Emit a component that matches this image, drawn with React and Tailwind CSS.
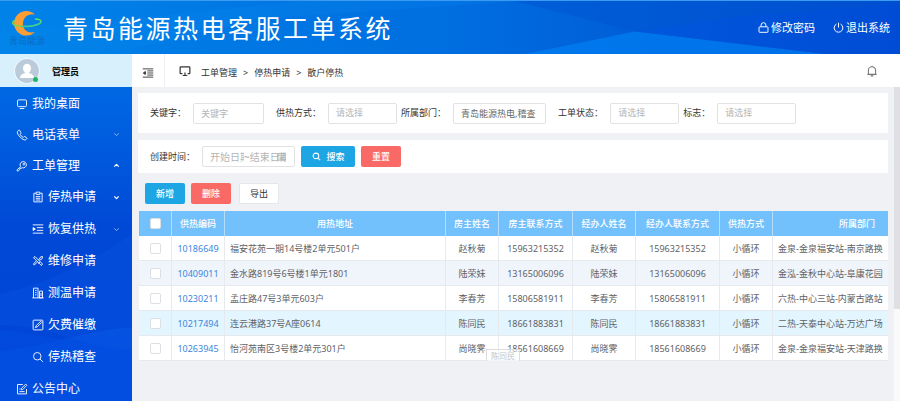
import { useState } from "react";

// All line icons share a 16px grid
const paths = {
  desktop: <><rect x="2" y="2.5" width="12" height="9" rx="1.5" /><path d="M5 14h6" /></>,
  phone: <path d="M3.6 1.6 2 3.2c-.6.8-.3 2.9 1.7 5.6 2.300 3 5.300 5.200 7.600 5.700 1.300.3 2.100-.2 3.100-1.400.4-.5.3-1-.2-1.400l-2.300-1.600c-.5-.3-1-.2-1.400.2l-.8.9c-1.900-.8-3.400-2.300-4.300-4.200l.9-.9c.4-.4.4-.9.1-1.400L4.900 1.800c-.4-.5-.9-.6-1.300-.2Z" />,
  key: <><path d="M6.200 8.800a4.200 4.200 0 1 1 2 1.500L6.800 11H5.200v1.600L3 14.500H1.500V13l4.700-4.200Z" /><circle cx="10.500" cy="5.500" r="1.100" /></>,
  clipboard: <><path d="M5 3H2.500v11.500h11V3H11" /><path d="M5.500 1.500h5v3h-5zM5 7.500h6M5 9.700h6M5 12h6" /></>,
  indent: <><path d="M1 2.500h14M6.500 6.200H15M6.500 9.800H15M1 13.500h14" /><path d="m1.500 6 3 2-3 2Z" fill="currentColor" /></>,
  outdent: <><path d="M1 2.500h14M7 8h8M1 13.500h14M7 5.200h8M7 10.800h8" /><path d="M4.500 6 1.700 8l2.800 2Z" fill="currentColor" /></>,
  tools: <><path d="m2 3.500 2-1.500L14 12l-1.500 2L2 3.500ZM9 6.500l2.500-4L14 2l-.5 3-3.500 2M7 9.500l-4 4L2 12l3.500-4" /><path d="m10.500 9.500-2 2" /></>,
  building: <><path d="M2 14.500v-13h6v13M.5 14.500h15M4 4.500h2M4 7.500h2M4 10.500h2" /><path d="M10 5.500h4v9h-4zM12 8v4" /></>,
  pencil: <><rect x="1.500" y="1.500" width="13" height="13" rx="1" /><path d="m4.500 11.500 1-2.500 6-6 1.500 1.500-6 6-2.500 1Z" /></>,
  search: <><circle cx="7" cy="7" r="5" /><path d="m10.700 10.700 3.800 3.800" /></>,
  notice: <><path d="M9 2H2v12.500h12V8" /><path d="m7 9 .3-2L13 1.500 14.500 3 9 8.700 7 9ZM4.500 8H6M4.500 11.500h7" /></>,
  lock: <><rect x="1.500" y="7" width="13" height="8" rx="1" /><path d="M4.500 7V4.500a3.500 3.500 0 0 1 7 0V7" /></>,
  power: <><path d="M5 3a6.300 6.300 0 1 0 6 0M8 1v7" /></>,
  monitor: <><path d="M4.500 11.500h-2c-.6 0-1-.4-1-1v-7c0-.6.4-1 1-1h11c.6 0 1 .4 1 1v7c0 .6-.4 1-1 1h-2" /><path d="M8 10v3.500M5 14h6" /></>,
  bell: <><path d="M1.800 12.500h12.400M3.200 12.500V7.200a4.800 4.800 0 0 1 9.600 0v5.300M6.200 14.500h3.600M8 1v1.400" /></>,
  calendar: <><path d="M1.500 3h13v11.500h-13zM1.500 6.500h13M5 1.500V4M11 1.500V4M4.500 9.500h7M4.500 12h7" /></>,
  down: <path d="m3 5.500 5 5 5-5" />,
  up: <path d="m3 10.500 5-5 5 5" />,
};

const Icon = ({ name, className = "size-3", weight = 1.4 }) => (
  <svg
    viewBox="0 0 16 16"
    className={`shrink-0 ${className}`}
    fill="none"
    stroke="currentColor"
    strokeWidth={weight}
    strokeLinejoin="round"
    aria-hidden="true"
  >
    {paths[name]}
  </svg>
);

const menu = [
  { label: "我的桌面", icon: "desktop" },
  { label: "电话表单", icon: "phone", arrow: "down" },
  {
    label: "工单管理",
    icon: "key",
    arrow: "up",
    bold: true,
    children: [
      { label: "停热申请", icon: "clipboard", arrow: "down", bold: true },
      { label: "恢复供热", icon: "indent", arrow: "down" },
      { label: "维修申请", icon: "tools" },
      { label: "测温申请", icon: "building" },
      { label: "欠费催缴", icon: "pencil" },
      { label: "停热稽查", icon: "search" },
    ],
  },
  { label: "公告中心", icon: "notice" },
];

const columns = [
  { label: "供热编码", width: "w-[53px]" },
  { label: "用热地址", width: "w-[221px]" },
  { label: "房主姓名", width: "w-[53px]" },
  { label: "房主联系方式", width: "w-[74px]" },
  { label: "经办人姓名", width: "w-[63px]" },
  { label: "经办人联系方式", width: "w-[84px]" },
  { label: "供热方式", width: "w-[53px]" },
  { label: "所属部门", width: "w-[169px]" },
];

const rows = [
  { code: "10186649", address: "福安花苑一期14号楼2单元501户", name: "赵秋菊", phone: "15963215352", dept: "金泉-金泉福安站-南京路换", bg: "bg-white" },
  { code: "10409011", address: "金水路819号6号楼1单元1801", name: "陆荣妹", phone: "13165006096", dept: "金泓-金秋中心站-阜康花园", bg: "bg-[#f0f5fc]" },
  { code: "10230211", address: "孟庄路47号3单元603户", name: "李春芳", phone: "15806581911", dept: "六热-中心三站-内蒙古路站", bg: "bg-white" },
  { code: "10217494", address: "连云港路37号A座0614", name: "陈同民", phone: "18661883831", dept: "二热-天泰中心站-万达广场", bg: "bg-[#e3f5fe]" },
  { code: "10263945", address: "怡河苑南区3号楼2单元301户", name: "尚晓霁", phone: "18561608669", dept: "金泉-金泉福安站-天津路换", bg: "bg-white" },
];

const Logo = () => (
  <div className="flex w-12 flex-col items-center">
    <svg viewBox="0 0 32 26" className="h-[26px] w-8" aria-hidden="true">
      <path d="M24 4.500A12.300 12.300 0 1 0 24 22c-8 2-12.500-3-12-9 .4-5.500 5-10 12-8.500Z" fill="#f99d35" />
      <path d="M4 10.500C-1 13 2 16 12 16.500c9 .4 18-2 18-5 0-1.800-3-2.500-6-2.600" fill="none" stroke="#6fdc55" strokeWidth="1.500" />
      <path d="M10 16.400c9 .4 19-1.400 20-5" fill="none" stroke="#27c6b0" strokeWidth="1" />
    </svg>
    <span className="text-[9px] leading-[10px] text-[#0a6cc4]">青岛能源</span>
  </div>
);

const Header = () => (
  <header className="relative flex h-[54px] items-center overflow-hidden border-t border-[#3a9bf0] bg-gradient-to-r from-[#0083e9] via-[#006ee0] to-[#0046cb] text-white">
    <svg className="absolute inset-0 h-full w-full" viewBox="0 0 900 54" preserveAspectRatio="none" aria-hidden="true">
      <path d="M515 0H900V3L730 17 635 31Z" fill="#0055d4" opacity=".55" />
      <path d="M525 54 635 31 825 54Z" fill="#0080f4" opacity=".7" />
      <path d="M635 31 730 17 900 2V54H825Z" fill="#0052df" opacity=".5" />
      <path d="M110 54 260 18 520 0H300L0 32V54Z" fill="#0a8df0" opacity=".2" />
    </svg>
    <div className="relative flex flex-1 items-center gap-3 pl-[3px]">
      <Logo />
      <h1 className="text-[25px] leading-8 font-normal tracking-widest whitespace-nowrap">青岛能源热电客服工单系统</h1>
    </div>
    <nav className="relative flex gap-[18px] pr-2.5 text-[11px]">
      <a href="#password" className="flex items-center gap-0.5">
        <Icon name="lock" className="size-[11px]" />
        修改密码
      </a>
      <a href="#logout" className="flex items-center gap-0.5">
        <Icon name="power" className="size-[11px]" />
        退出系统
      </a>
    </nav>
  </header>
);

const MenuItem = ({ item, sub }) => (
  <a
    href={`#${item.icon}`}
    className={`flex items-center gap-1 pr-3 text-xs hover:bg-white/10 ${sub ? "h-8 pl-8" : "h-[31px] pl-4"}`}
  >
    <Icon name={item.icon} className="size-3" weight={1.2} />
    <span className="flex-1">{item.label}</span>
    {item.arrow && (
      <Icon name={item.arrow} className={`size-[7px] ${item.bold ? "" : "opacity-60"}`} weight={item.bold ? 3 : 2.2} />
    )}
  </a>
);

const Sidebar = () => (
  <aside className="flex w-[132px] shrink-0 flex-col">
    <div className="flex h-[33px] items-center gap-3 bg-[#d8effc] pl-3.5">
      <div className="relative">
        <svg viewBox="0 0 26 26" className="size-[26px]" aria-hidden="true">
          <circle cx="13" cy="13" r="12.500" fill="#bccbda" stroke="#edf6fc" strokeWidth="1.200" />
          <ellipse cx="13" cy="10.500" rx="4" ry="4.800" fill="#fff" />
          <path d="M6 20c0-3 2-4 5-4.700V13h4v2.300c3 .7 5 1.700 5 4.700Z" fill="#fff" />
        </svg>
        <span className="absolute right-0.5 bottom-0.5 size-[5px] rounded-full bg-[#21b765]" />
      </div>
      <span className="pt-0.5 text-[9px] font-bold text-black">管理员</span>
    </div>
    <nav className="relative flex-1 overflow-hidden bg-gradient-to-b from-[#0068e3] via-[#0048d6] via-45% to-[#0044d8] text-white">
      <svg className="absolute inset-0 h-full w-full" viewBox="0 0 132 314" preserveAspectRatio="none" aria-hidden="true">
        <path d="M0 205C40 196 90 176 132 145V260C90 262 50 234 0 236Z" fill="#0a5ae6" opacity=".25" />
        <path d="M0 262C50 256 90 240 132 238V314H0Z" fill="#0b63ee" opacity=".3" />
        <path d="M0 240C50 246 90 258 132 260V314H0Z" fill="#0050e4" opacity=".4" />
      </svg>
      <div className="relative pt-px">
        {menu.map((item) => (
          <div key={item.label}>
            <MenuItem item={item} />
            {item.children?.map((child) => <MenuItem key={child.label} item={child} sub />)}
          </div>
        ))}
      </div>
    </nav>
  </aside>
);

const TopBar = () => (
  <div className="flex h-[33px] items-center bg-white text-[#333]">
    <button type="button" aria-label="收起菜单" className="flex h-full w-[33px] items-center justify-center border-r border-[#eceef1] pt-1">
      <Icon name="outdent" className="size-3" weight={1.2} />
    </button>
    <Icon name="monitor" className="ml-3.5 size-3" weight={1.6} />
    <nav className="ml-2.5 flex flex-1 items-center gap-1.5 pt-1">
      <a href="#orders">工单管理</a>
      <span>&gt;</span>
      <a href="#stop">停热申请</a>
      <span>&gt;</span>
      <a href="#retail">散户停热</a>
    </nav>
    <button type="button" aria-label="通知" className="mr-[22px] text-[#777]">
      <Icon name="bell" className="size-3" />
    </button>
  </div>
);

const labelStyle = "pr-[7px] whitespace-nowrap";
const fieldStyle = "h-[21px] rounded-xs border border-[#e2e2e2] bg-white px-[7px] outline-none placeholder:text-[#b5b5b5]";

const Field = ({ id, label, className, ...props }) => (
  <div className="flex items-center">
    <label htmlFor={id} className={labelStyle}>{label}：</label>
    <input id={id} type="text" className={`${fieldStyle} ${className}`} {...props} />
  </div>
);

const SelectField = ({ id, label, className }) => (
  <div className="flex items-center">
    <label htmlFor={id} className={labelStyle}>{label}：</label>
    <select id={id} defaultValue="" className={`${fieldStyle} appearance-none text-[#b5b5b5] ${className}`}>
      <option value="">请选择</option>
    </select>
  </div>
);

const Filters = () => (
  <form className="flex flex-col gap-[7px]" onSubmit={(e) => e.preventDefault()}>
    <div className="flex min-h-10 flex-wrap items-center gap-y-2 bg-white pl-3">
      <div className="mr-3"><Field id="keyword" label="关键字" className="w-[71px]" placeholder="关键字" /></div>
      <div className="mr-1"><SelectField id="mode" label="供热方式" className="w-[69px]" /></div>
      <div className="mr-3"><Field id="dept" label="所属部门" className="w-[93px] text-[#666]" defaultValue="青岛能源热电,稽查" /></div>
      <div className="mr-1"><SelectField id="status" label="工单状态" className="w-[69px]" /></div>
      <SelectField id="flag" label="标志" className="w-[79px]" />
    </div>
    <div className="flex min-h-[33px] flex-wrap items-center bg-white pl-3">
      <label htmlFor="start" className={labelStyle}>创建时间：</label>
      <div className="relative mr-1.5 flex h-[21px] w-[93px] items-center rounded-xs border border-[#e2e2e2] pl-[7px] text-[10px] text-[#aaa]">
        <input id="start" type="text" placeholder="开始日期" className="w-[34px] outline-none placeholder:text-[#b5b5b5]" />
        ~
        <input type="text" aria-label="结束日期" placeholder="结束日期" className="w-9 outline-none placeholder:text-[#b5b5b5]" />
        <Icon name="calendar" className="absolute right-2 size-[9px]" />
      </div>
      <button type="submit" className="mr-1.5 flex h-[21px] w-[54px] items-center justify-center gap-1.5 rounded-xs bg-[#1ea6e4] font-medium text-white">
        <Icon name="search" className="size-[9px]" weight={1.8} />
        搜索
      </button>
      <button type="reset" className="h-[21px] w-10 rounded-xs bg-[#f96a66] font-medium text-white">重置</button>
    </div>
  </form>
);

const Checkbox = ({ label, checked, onChange }) => (
  <input
    type="checkbox"
    aria-label={label}
    checked={checked}
    onChange={onChange}
    className="mx-auto block size-[11px] appearance-none rounded-xs border border-[#dcdfe3] bg-white checked:bg-[#1ea6e4]"
  />
);

const cell = "overflow-hidden border-r border-b border-[#e6eaee] pt-px whitespace-nowrap";

const OrderTable = () => {
  const [selected, setSelected] = useState([]);

  const toggle = (code) =>
    setSelected(selected.includes(code) ? selected.filter((c) => c !== code) : [...selected, code]);

  return (
    <div className="relative ml-px overflow-hidden">
      <table className="w-full min-w-[803px] table-fixed border-separate border-spacing-0 text-center text-[#606266]">
        <thead>
          <tr className="h-[25px] bg-[#73c1fc] text-white">
            <th className="w-[33px] border-r border-[#b5ddfc]">
              <Checkbox
                label="全选"
                checked={selected.length === rows.length}
                onChange={() => setSelected(selected.length === rows.length ? [] : rows.map((r) => r.code))}
              />
            </th>
            {columns.map((col) => (
              <th key={col.label} className={`border-r border-[#b5ddfc] font-medium whitespace-nowrap ${col.width}`}>
                {col.label}
              </th>
            ))}
          </tr>
        </thead>
        <tbody>
          {rows.map((row) => (
            <tr key={row.code} className={`h-[25px] ${row.bg}`}>
              <td className={cell}>
                <Checkbox label={row.code} checked={selected.includes(row.code)} onChange={() => toggle(row.code)} />
              </td>
              <td className={cell}><a href={`#${row.code}`} className="text-[#3a86e0]">{row.code}</a></td>
              <td className={`${cell} pl-[5px] text-left`}>{row.address}</td>
              <td className={cell}>{row.name}</td>
              <td className={cell}>{row.phone}</td>
              <td className={cell}>{row.name}</td>
              <td className={cell}>{row.phone}</td>
              <td className={cell}>小循环</td>
              <td className={`${cell} pl-[5px] text-left`}>{row.dept}</td>
            </tr>
          ))}
        </tbody>
      </table>
      {/* Fading hover tip */}
      <span className="absolute bottom-0 left-[347px] h-3 border border-b-0 border-[#dcdcdc] bg-white/50 px-1 text-[8px] leading-3 text-[#c4c4c4]">
        陈同民
      </span>
    </div>
  );
};

export default function App() {
  return (
    <div className="flex min-h-screen flex-col bg-[#eff1f5] font-['Noto_Sans','Noto_Sans_CJK_SC',sans-serif] text-[9px] leading-3 text-[#333]">
      <Header />
      <div className="flex flex-1">
        <Sidebar />
        <div className="flex min-w-0 flex-1 flex-col">
          <TopBar />
          <div className="flex flex-1">
            <main className="min-w-0 flex-1 px-1.5 pt-1.5">
              <Filters />
              <div className="flex items-center px-[7px] pt-[10px] pb-[7px]">
                <button type="button" className="mr-1.5 h-[21px] w-10 rounded-xs bg-[#1ea6e4] font-medium text-white">新增</button>
                <button type="button" className="mr-2 h-[21px] w-10 rounded-xs bg-[#f96a66] font-medium text-white">删除</button>
                <button type="button" className="h-[21px] w-10 rounded-xs border border-[#e4e6ea] bg-white">导出</button>
              </div>
              <OrderTable />
            </main>
            <div className="w-1.5 bg-[#fafafb]">
              <div className="h-[70%] bg-[#dfe0e3]" />
            </div>
          </div>
        </div>
      </div>
    </div>
  );
}
